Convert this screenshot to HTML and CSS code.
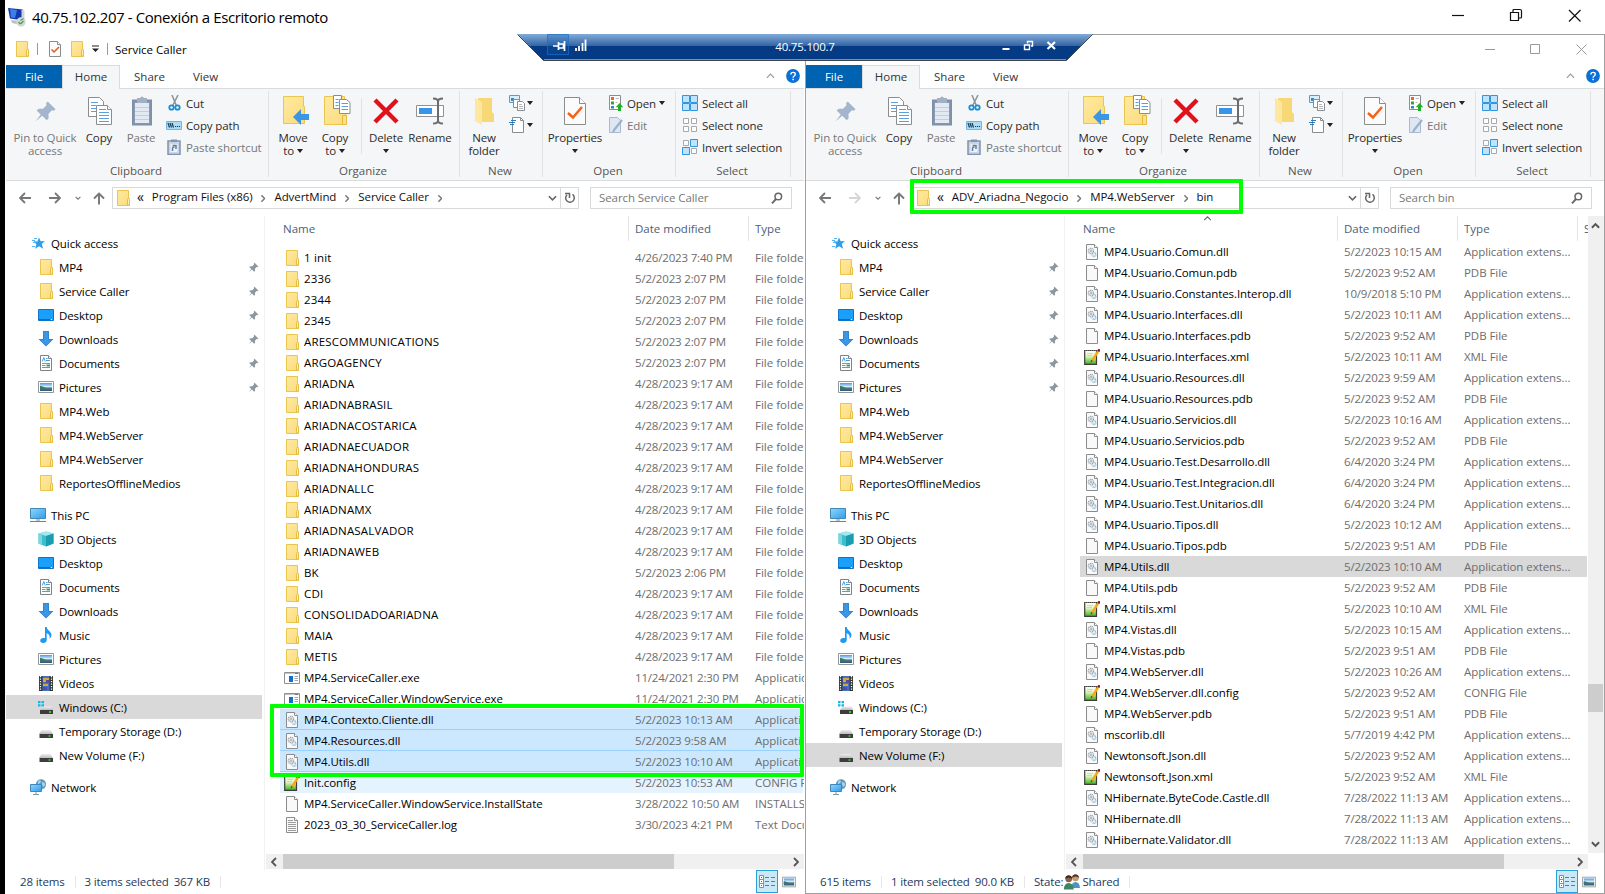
FILE: index.html
```html
<!DOCTYPE html>
<html lang="es">
<head>
  <meta charset="UTF-8" />
  <meta name="viewport" content="width=device-width, initial-scale=1.0" />
  <title>40.75.102.207 - Conexión a Escritorio remoto</title>
  <link rel="stylesheet" href="styles.css">
</head>
<body>
  <svg class="sprite" width="0" height="0" aria-hidden="true">
    <defs>
      <linearGradient id="gFolder" x1="0" y1="0" x2="1" y2="1"><stop offset="0" stop-color="#ffe9a2"/><stop offset="1" stop-color="#fbdc7c"/></linearGradient>
      <linearGradient id="gScreen" x1="0" y1="0" x2="1" y2="1"><stop offset="0" stop-color="#8fd4fb"/><stop offset="1" stop-color="#2f9fe8"/></linearGradient>
      <linearGradient id="gSky" x1="0" y1="0" x2="0" y2="1"><stop offset="0" stop-color="#4f95e0"/><stop offset=".5" stop-color="#e4f3fb"/><stop offset=".6" stop-color="#4d8078"/><stop offset="1" stop-color="#2c5c84"/></linearGradient>
      <linearGradient id="gNote" x1="0" y1="0" x2="0" y2="1"><stop offset="0" stop-color="#fff"/><stop offset=".4" stop-color="#e6f5c4"/><stop offset="1" stop-color="#35b516"/></linearGradient>
      <linearGradient id="gDrive" x1="0" y1="0" x2="0" y2="1"><stop offset="0" stop-color="#eee"/><stop offset="1" stop-color="#bbb"/></linearGradient>
      <linearGradient id="gBar" x1="0" y1="0" x2="0" y2="1"><stop offset="0" stop-color="#82abdb"/><stop offset=".44" stop-color="#3565a3"/><stop offset=".47" stop-color="#053a84"/><stop offset="1" stop-color="#053a84"/></linearGradient>
    </defs>
    <symbol id="folder" viewBox="0 0 16 16"><path d="M2.500.5h11v8h1v7h-12z" fill="url(#gFolder)" stroke="#eac54f"/><path d="M12.500 15V9.500q0-1 1-1t1 1V15z" fill="#fff0b8" stroke="#e6bd42"/></symbol>
    <symbol id="page" viewBox="0 0 16 16"><path d="M2.500.5h8l3 3v12h-11z" fill="#f9f9f9" stroke="#8c8c8c"/><path d="M10.500.5v3h3" fill="#fff" stroke="#8c8c8c"/></symbol>
    <symbol id="dll" viewBox="0 0 16 16"><path d="M2.500.5h8l3 3v12h-11z" fill="#f9f9f9" stroke="#8c8c8c"/><path d="M10.500.5v3h3" fill="#fff" stroke="#8c8c8c"/><circle cx="7" cy="7" r="2.600" fill="none" stroke="#9aa3aa" stroke-width="1.400" stroke-dasharray="1.200 .6"/><circle cx="7" cy="7" r="1" fill="none" stroke="#8c959c" stroke-width=".7"/><circle cx="10" cy="10.500" r="1.900" fill="#e2f0fa" stroke="#8db5d0" stroke-width="1.200" stroke-dasharray="1 .5"/></symbol>
    <symbol id="text" viewBox="0 0 16 16"><path d="M2.500.5h8l3 3v12h-11z" fill="#f9f9f9" stroke="#8c8c8c"/><path d="M10.500.5v3h3" fill="#fff" stroke="#8c8c8c"/><path d="M4 3.500h5M4 5.500h8M4 7.500h8M4 9.500h8M4 11.500h8M4 13.500h8" stroke="#9b9b9b"/></symbol>
    <symbol id="exe" viewBox="0 0 16 16"><path d="M.5 2.500h15v11H.5z" fill="#fff" stroke="#909090"/><path d="M1 3.500h14" stroke="#c4c4c4"/><path d="M11 3.500h3" stroke="#777"/><path d="M5 6h4v6H5z" fill="#0f6fd0"/><path d="M10.500 6.500H14M10.500 8.500H14M10.500 10.500H14" stroke="#a5a5a5"/></symbol>
    <symbol id="config" viewBox="0 0 16 16"><path d="M.7 1.500h11.800v13.800H.7z" fill="url(#gNote)" stroke="#3c3c3c" stroke-width="1.200"/><path d="M1 1.500h12" stroke="#777" stroke-dasharray="1 1"/><path d="M3 4.500h6M3 6.500h5" stroke="#bbb" stroke-width=".6"/><path d="M14.600 1.400 8 12" stroke="#f5a81c" stroke-width="2.400"/><path d="M15.600.2 14.300 2.400" stroke="#a3141c" stroke-width="2.400"/><path d="m7 10.800 2 1.200-2.300 1.700z" fill="#7a4b14"/></symbol>
    <symbol id="star" viewBox="0 0 16 16"><path d="m9 2.500 1.700 3.700 4.100-.1-3 2.900 1.400 4.700-4.100-2.500-4 2.500 1.300-4.500L3.500 6.300l3.900.1z" fill="#2d9fe8"/><path d="M2 5.500h3M3 7.500h3M2 11.500h3M4 3.500h3" stroke="#5ab4ec"/></symbol>
    <symbol id="desktop" viewBox="0 0 16 16"><path d="M.5 2.500h15v11H.5z" fill="#1aa0fb" stroke="#0c75c8"/><path d="M1 12.500h11" stroke="#0b6ab8"/><path d="M13 12.500h1" stroke="#fff"/></symbol>
    <symbol id="down" viewBox="0 0 16 16"><path d="M5 0h6v8h4.500L8 15.500.500 8H5z" fill="#3d96e4"/><path d="M5.500.5h5v8h3.800L8 14.700 1.700 8.500h3.800z" fill="none" stroke="#2c80cf" stroke-width=".8"/></symbol>
    <symbol id="docs" viewBox="0 0 16 16"><path d="M2.500.5h8l3 3v12h-11z" fill="#fff" stroke="#7d8286"/><path d="M10.500.5v3h3" fill="#fff" stroke="#7d8286"/><path d="m4.300 6.500 1.500-4 1.500 4M4 8.500h8M4 10.500h3.500M4 12.500h8" fill="none" stroke="#4ba0dd"/><path d="M8 5.500h4M8 3.500h1.500" stroke="#4ba0dd"/><path d="M8.500 9.500h3.500v2H8.500z" fill="#54906d"/></symbol>
    <symbol id="pics" viewBox="0 0 16 16"><path d="M.5 2.500h15v11H.5z" fill="#fff" stroke="#92979b"/><path d="M2 4h12v8H2z" fill="url(#gSky)"/><path d="M2 7c3 0 5 2 8 3H2z" fill="#3e7564"/></symbol>
    <symbol id="pc" viewBox="0 0 16 16"><path d="M.5 1.500h15v10H.5z" fill="url(#gScreen)" stroke="#4387b4"/><path d="M6 12h4v2H6z" fill="#b9c5cc"/><path d="M0 14.500h16" stroke="#71838e"/></symbol>
    <symbol id="cube" viewBox="0 0 16 16"><path d="m8 .5 7.500 2v10L8 15.500l-7.500-3v-10z" fill="#3bbfcf"/><path d="m8 .5 7.500 2L8 5 .5 2.500z" fill="#a6e6ec"/><path d="M8 5v10.500l7.500-3v-10z" fill="#1a9db2"/><path d="M.5 2.500 4 3.700v10L.5 12.500z" fill="#7bd7df"/></symbol>
    <symbol id="music" viewBox="0 0 16 16"><path d="M7 0h1.700c.3 3.500 4.800 4.300 4.800 8 0 1.600-1 2.800-2 3.500.7-3.200-1-4.600-2.800-5.200V13c0 2-1.500 3-3.500 3S2.200 15 2.200 13.500s1.500-2.900 4.800-2.500z" fill="#1c9bf3"/></symbol>
    <symbol id="video" viewBox="0 0 16 16"><path d="M1 1h14v15H1z" fill="#333"/><path d="M4.500 1h7v15h-7z" fill="#3f74c8"/><path d="M5 3h6v4H5zM5 9h5v2H5z" fill="#d2a83a"/><path d="M8 5h3v3H8zM5 12h4v3H5z" fill="#5b4a9e"/><path d="M2.500 1v15M13.500 1v15" stroke="#fff" stroke-width="1.300" stroke-dasharray="1.300 1.200"/></symbol>
    <symbol id="drive" viewBox="0 0 16 16"><path d="M3.500 7h9L15 11H1z" fill="url(#gDrive)"/><path d="M1.500 11H15v4H1.500z" fill="#3d3d3d"/><path d="M10.500 13h2" stroke="#4be04b" stroke-width="1.300"/></symbol>
    <symbol id="windrive" viewBox="0 0 16 16"><path d="M4.500 7.500h9L15 11H2z" fill="url(#gDrive)"/><path d="M2 11h13v4H2z" fill="#3d3d3d"/><path d="M11 13h2" stroke="#4be04b" stroke-width="1.300"/><path d="M0 2h2.500v2.300H0zM3.500 2H6v2.300H3.500zM0 5.300h2.500v2.200H0zM3.500 5.300H6v2.200H3.500z" fill="#19b3e6"/></symbol>
    <symbol id="network" viewBox="0 0 16 16"><circle cx="11" cy="5.300" r="5.100" fill="#5b98bf"/><path d="M8 2c2-2 3 0 3 1S9 4 8 6zM12 3c2 0 3 1 3.500 3L13 8c-1-2-1-3-1-5z" fill="#a8d2e8"/><path d="M.5 5.500h11v7H.5z" fill="url(#gScreen)" stroke="#3e86bb"/><path d="M3 15.500h6M6 13v2" stroke="#7a95a5"/></symbol>
    <symbol id="pin" viewBox="0 0 16 16"><path d="m9.500 1 5.500 5.500-1.400 1-1.200-.3-2.400 2.500.2 3-1.300 1.300L5.700 11 1 15l3.700-5L1.800 7.300 3.300 6l3 .1L8.700 3.700l-.3-1.500z" fill="currentColor"/></symbol>
    <symbol id="copy" viewBox="0 0 24 28"><g fill="#fff" stroke="#8a8d90"><path d="M.5.5h11l4 4v15H.5z"/><path d="M8.500 8.500h11l4 4v15h-15z"/><path d="M19.500 8.500v4h4"/></g><path d="M3 5.500h7M3 8.500h5M3 11.500h5M3 14.500h5M11 12.500h7M11 15.500h10M11 18.500h10M11 21.500h10M11 24.500h10" stroke="#58a0e0"/></symbol>
    <symbol id="paste" viewBox="0 0 22 30"><path d="M2 4.500h18v24H2z" fill="#8b9bb3" stroke="#7f90aa" stroke-width="2"/><path d="M4 7h14v20H4z" fill="#e3eaf3"/><path d="M6 2h3q2-3 4 0h3v5H6z" fill="#a3b0c3"/><path d="M4 11.500h14M4 15.500h14M4 19.500h14M4 23.500h14" stroke="#c3cedd"/></symbol>
    <symbol id="cut" viewBox="0 0 16 16"><path d="m6 0 4.500 11M12 0 6.500 11" stroke="#8c9399" stroke-width="1.500"/><circle cx="5.500" cy="12.500" r="2.200" fill="none" stroke="#1c8bd0" stroke-width="1.800"/><circle cx="11.500" cy="12.500" r="2.200" fill="none" stroke="#1c8bd0" stroke-width="1.800"/></symbol>
    <symbol id="copypath" viewBox="0 0 16 16"><path d="M.5 4.500h15v8H.5z" fill="#a9dcf7" stroke="#72b7de"/><path d="m2 6 1.500 4.500M4 6l1.500 4.500M6 6l1.500 4.500" stroke="#1c3c55" stroke-width="1.200"/><path d="M9 9.500h5" stroke="#1c3c55" stroke-width="1.200" stroke-dasharray="1.200 .8"/></symbol>
    <symbol id="pastesc" viewBox="0 0 16 16"><path d="M2 2h12v13.500H2z" fill="#c9d5e6" stroke="#7f92ae" stroke-width="1.500"/><path d="M5 .5h6v2.500H5z" fill="#8396b0"/><path d="M4.500 5h7v8h-7z" fill="#eef3f9"/><path d="M6.500 12V9q0-1 2-1M6.500 6.500h3.500V10" fill="none" stroke="#667d9f" stroke-width="1.500"/></symbol>
    <symbol id="moveto" viewBox="0 0 26 29"><path d="M.5.5h20v10h1v17H.5z" fill="url(#gFolder)" stroke="#eac54f"/><path d="M10 21l8-8v5h8v6h-8v5z" fill="#3d96e4"/></symbol>
    <symbol id="copyto" viewBox="0 0 27 30"><path d="M.5 1.500h20v10h1.500v18H.5z" fill="url(#gFolder)" stroke="#eac54f"/><path d="M18.500 20.500h4v9h-4z" fill="#fbe08a" stroke="#e6bd42"/><g fill="#fff" stroke="#8a8d90"><path d="M9.500.5h8v13h-8z"/><path d="M15.500 4.500h7l3.500 3v11H15.500z"/></g><path d="M11.500 4.500h3M11.500 7.500h3M11.500 10.500h3M17.500 8.500H24M17.500 11.500H24M17.500 14.500H24" stroke="#58a0e0"/></symbol>
    <symbol id="delete" viewBox="0 0 26 26"><path d="m2 2 22 22M24 2 2 24" stroke="#e0101c" stroke-width="4.400"/></symbol>
    <symbol id="rename" viewBox="0 0 28 28"><path d="M.5 8.500h27v11H.5z" fill="#fff" stroke="#8f9294"/><path d="M3 11h13v6H3z" fill="#3695e8"/><path d="M17 1.500q5 0 5 3v19q0 3-5 3M27 1.500q-5 0-5 3v19q0 3 5 3" fill="none" stroke="#6a6d70" stroke-width="2"/></symbol>
    <symbol id="newfolder" viewBox="0 0 19 28"><path d="M3 1h14v14l2 2v8H3z" fill="#f8d777"/><path d="m0 1 7 4v23l-7-4z" fill="#ffe7a0"/></symbol>
    <symbol id="newitem" viewBox="0 0 16 16"><path d="M.5.5h10v7H.5z" fill="#d9effb" stroke="#5b9cc8"/><path d="M2 3h3v3H2z" fill="#3f86b8"/><g fill="#fff" stroke="#8a8d90"><path d="M4.500 4.500h6v8h-6z"/><path d="M8.500 6.500h5l2 2v7h-7z"/></g><path d="M10 9.500h3M10 11.500h4M10 13.500h4" stroke="#b5b5b5"/></symbol>
    <symbol id="easy" viewBox="0 0 16 16"><path d="M3.500.5h8l3 3v12h-11z" fill="#fff" stroke="#8a8d90"/><path d="M11.500.5v3h3" fill="none" stroke="#8a8d90"/><path d="M2 3.500h5M0 5.500h6M1 7.500h4" stroke="#2d7dbe"/></symbol>
    <symbol id="props" viewBox="0 0 22 28"><path d="M.5.5h15l6 6v21H.5z" fill="#fbfbfb" stroke="#8a8d90"/><path d="M15.500.5v6h6" fill="#fff" stroke="#8a8d90"/><path d="m4 16 5 4.500L18 10" fill="none" stroke="#f4621a" stroke-width="2.600"/></symbol>
    <symbol id="check" viewBox="0 0 12 16"><path d="M.5.5h8l3 3v12H.5z" fill="#fbfbfb" stroke="#8a8d90"/><path d="M8.500.5v3h3" fill="#fff" stroke="#8a8d90"/><path d="m2.500 8.500 2.500 2.500L10 6" fill="none" stroke="#e8561b" stroke-width="1.500"/></symbol>
    <symbol id="open" viewBox="0 0 16 16"><path d="M1.500.5h11v14h-11z" fill="#fff" stroke="#8a8d90"/><path d="M3 2h3v3H3z" fill="#f4621a"/><path d="M3 6.500h3v3H3z" fill="#2ba82b"/><path d="M3 11h3v2.500H3z" fill="#2d7fd8"/><path d="M7.500 3.500H11M7.500 7.500h2" stroke="#bbb"/><path d="m11.500 8 3.700 4.300H13V16h-3v-3.700H7.800z" fill="#22ac22"/></symbol>
    <symbol id="edit" viewBox="0 0 16 16"><path d="M1.500.5h8l3 3v12h-11z" fill="#dde7f3" stroke="#a9bad0"/><path d="m14 3-7.500 9.500L5 15" stroke="#9fb2cb" stroke-width="2.200"/></symbol>
    <symbol id="selall" viewBox="0 0 16 16"><path d="M.5.5h7v7h-7zM8.500.5h7v7h-7zM.5 8.500h7v7h-7zM8.500 8.500h7v7h-7z" fill="#bfe3fb" stroke="#3594dc"/></symbol>
    <symbol id="selnone" viewBox="0 0 16 16"><path d="M1.500 1.500h5v5h-5zM9.500 1.500h5v5h-5zM1.500 9.500h5v5h-5zM9.500 9.500h5v5h-5z" fill="#fff" stroke="#a8a8a8"/></symbol>
    <symbol id="selinv" viewBox="0 0 16 16"><path d="M1.500 1.500h5v5h-5zM9.500 9.500h5v5h-5z" fill="#fff" stroke="#a8a8a8"/><path d="M8.500.5h7v7h-7zM.5 8.500h7v7h-7z" fill="#bfe3fb" stroke="#3594dc"/></symbol>
    <symbol id="help" viewBox="0 0 14 14"><circle cx="7" cy="7" r="6.900" fill="#0a6fd6"/><path d="M4.900 5.400q0-2 2.200-2t2.200 1.800q0 1-1.200 1.800Q7.100 7.600 7.100 8.700" fill="none" stroke="#fff" stroke-width="1.400"/><path d="M6.300 9.800h1.600v1.500H6.300z" fill="#fff"/></symbol>
    <symbol id="back" viewBox="0 0 12 12"><path d="M12 6H1M6 1 1 6l5 5" fill="none" stroke="currentColor" stroke-width="1.800"/></symbol>
    <symbol id="fwd" viewBox="0 0 12 12"><path d="M0 6h11M6 1l5 5-5 5" fill="none" stroke="currentColor" stroke-width="1.800"/></symbol>
    <symbol id="up" viewBox="0 0 12 12"><path d="M6 12V1M1 6l5-5 5 5" fill="none" stroke="currentColor" stroke-width="1.900"/></symbol>
    <symbol id="chev" viewBox="0 0 10 6"><path d="m1 1 4 4 4-4" fill="none" stroke="currentColor" stroke-width="1.800"/></symbol>
    <symbol id="chevup" viewBox="0 0 10 6"><path d="m1 5 4-4 4 4" fill="none" stroke="currentColor" stroke-width="1.300"/></symbol>
    <symbol id="scrollup" viewBox="0 0 10 7"><path d="m1 6 4-4 4 4" fill="none" stroke="currentColor" stroke-width="2.200"/></symbol>
    <symbol id="scrolldown" viewBox="0 0 10 7"><path d="m1 1 4 4 4-4" fill="none" stroke="currentColor" stroke-width="2.200"/></symbol>
    <symbol id="refresh" viewBox="0 0 12 12"><path d="M3 2.800a4.300 4.300 0 1 0 5.500-.4" fill="none" stroke="#666" stroke-width="1.500"/><path d="M1 1.500h4.500V6" fill="none" stroke="#666" stroke-width="1.500"/></symbol>
    <symbol id="lens" viewBox="0 0 12 12"><circle cx="7.300" cy="4.500" r="3.300" fill="none" stroke="#666" stroke-width="1.500"/><path d="M5 7 1 11.300" stroke="#666" stroke-width="1.900"/></symbol>
    <symbol id="details" viewBox="0 0 16 14"><path d="M.5.5h4v12h-4zM.5 4.500h4M.5 8.500h4" fill="#fff" stroke="#8a8d90"/><path d="M2 10.500h1" stroke="#d33"/><path d="M2 2.500h1M2 6.500h1" stroke="#555"/><path d="M6 2.500h4M12 2.500h4M6 6.500h4M12 6.500h4M6 10.500h4M12 10.500h4" stroke="#777"/></symbol>
    <symbol id="people" viewBox="0 0 16 16"><circle cx="11.500" cy="4" r="3.300" fill="#c79a72"/><path d="M8 4c0-5 7-5 7 0-2-2-4-2-7 0z" fill="#4b3524"/><path d="M7.500 14q0-6 4-6t4.500 6z" fill="#4b94c8"/><circle cx="4.700" cy="5" r="3.300" fill="#8a634a"/><path d="M1.200 5c0-5 7-5 7 0-2-2-4-2-7 0z" fill="#33271f"/><path d="M0 15.500Q0 9 4.700 9t5 6.500z" fill="#3f8561"/></symbol>
    <symbol id="remote" viewBox="0 0 18 19"><path d="m0 0 15 1.500v11L2 10.500z" fill="#1238b0"/><path d="m2 1 7 1-2 8-4-.5z" fill="#3f7de8"/><path d="m13.500 1.500 3 1v10l-3 .5z" fill="#cfd3da"/><path d="m3 12 8 1 2 4-9-2z" fill="#b9bfc7"/><circle cx="13" cy="14" r="4.700" fill="#d3d8d4"/><path d="m10.500 14 2 2M12.500 12.500l3-2M12.500 16l3-3" stroke="#43a047" stroke-width="1.200"/></symbol>
  </svg>

  <div class="screen">
    <header class="rdp-title">
      <svg class="rdp-icon" width="18" height="19"><use href="#remote"/></svg>
      <span class="rdp-name">40.75.102.207 - Conexión a Escritorio remoto</span>
      <svg class="rdp-controls" width="141" height="14" viewBox="0 0 141 14" fill="none" stroke="#111" stroke-width="1.200">
        <path d="M0 7.500h12"/>
        <path d="M58.500 4.500h8v8h-8zM61 4V2.500q0-1 1-1h6q1.500 0 1.500 1.500v6q0 1-1 1H67"/>
        <path d="m117 2 11.500 11.500M128.500 2 117 13.500"/>
      </svg>
    </header>

    <main class="windows" id="windows"></main>

    <div class="connbar">
      <svg width="576" height="27" viewBox="0 0 576 27">
        <path d="M.5 0h575l-26 26.500H26.500z" fill="url(#gBar)"/>
        <path d="M.5.5 26.500 26.500h523L575.500.5" fill="none" stroke="#3f4650"/>
        <path d="M27 25.500h522" stroke="#8ba9cd" stroke-width=".8"/>
        <path d="M30.500.5h21v20h-21z" fill="#0d5cad" fill-opacity=".3" stroke="#1c6fc4" stroke-opacity=".7"/>
        <path d="M36 12h5M41.500 8v8M41.500 10h5v4h-5M47.500 7v10" fill="none" stroke="#fff" stroke-width="1.700"/>
        <path d="M59 17v-3M62 17v-5M65.500 17V9M68.500 17V5.500" stroke="#fff" stroke-width="1.800"/>
        <path d="M485.500 15h7" stroke="#fff" stroke-width="2"/>
        <path d="M507.500 11h5v4.500h-5zM510.500 9.500V7.500h5V12H514" fill="none" stroke="#fff" stroke-width="1.400"/>
        <path d="m530.500 8 7.500 7M538 8l-7.500 7" stroke="#fff" stroke-width="2.200"/>
      </svg>
      <span class="connbar-host">40.75.100.7</span>
    </div>
    <div class="mark mark-path"></div>
    <div class="mark mark-files"></div>
  </div>

  <script src="script.js"></script>
</body>
</html>
```
FILE: styles.css
```css
* {
  box-sizing: border-box;
}

body, html {
  margin: 0;
  padding: 0;
  height: 894px;
  overflow: hidden;
  background: #000;
  color: #000;
  font-family: 'Open Sans', 'Noto Sans', sans-serif;
  font-size: 11.5px;
}

svg {
  display: block;
  flex: none;
}

.sprite {
  position: absolute;
}

.screen {
  position: relative;
  width: 1600px;
  height: 894px;
  margin-left: 5px;
  background: #fff;
}

.rdp-title {
  display: flex;
  align-items: center;
  height: 34px;
  padding: 0 0 0 3px;
}

.rdp-name {
  margin-left: 6px;
  font-size: 15px;
  letter-spacing: -0.41px;
  white-space: nowrap;
}

.rdp-controls {
  margin: -4px 12px 0 auto;
}

.windows {
  display: flex;
}

/* explorer window */
.win {
  display: flex;
  flex-direction: column;
  width: 800px;
  height: 860px;
  border: 1px solid #fff;
  white-space: nowrap;
}

.win.inactive {
  border-color: #a0a0a0;
}

.caption {
  display: flex;
  align-items: center;
  height: 30px;
  padding: 0 0 2px 8px;
}

.caption .bar {
  width: 1px;
  height: 12px;
  background: #999;
}

.caption .bar.first { margin: 0 11px 0 7px; }
.caption .doc { margin-right: 8px; }
.caption .bar.second { margin: 0 7px 0 7px; }
.caption .more { margin-left: 7px; }
.caption .controls { margin: 0 17px 0 auto; }

.tabs {
  display: flex;
  align-items: flex-end;
  height: 24px;
  border-bottom: 1px solid #dadbdc;
  color: #333;
}

.tab {
  height: 23px;
  line-height: 23px;
  text-align: center;
}

.tab.file {
  width: 56px;
  background: #0063b1;
  color: #fff;
}

.tab.home {
  width: 58px;
  height: 24px;
  margin-bottom: -1px;
  border: 1px solid #dadbdc;
  border-bottom: 0;
  line-height: 22px;
  background: #f5f6f7;
}

.tab.share { width: 59px; }
.tab.view { width: 53px; }

.tabs .collapse {
  margin: 0 11px 9px auto;
  color: #999;
}

.tabs .help {
  margin: 0 4px 5px 0;
}

.ribbon {
  display: flex;
  height: 92px;
  padding-top: 2px;
  background: #f5f6f7;
  border-bottom: 1px solid #dadbdc;
  color: #2b2b2b;
  letter-spacing: -0.12px;
}

.group {
  display: flex;
  flex-direction: column;
  height: 86px;
  border-right: 1px solid #e1e2e3;
}

.group-name {
  line-height: 13px;
  padding-right: 2px;
  text-align: center;
  color: #555;
  letter-spacing: 0;
}

.tools {
  display: flex;
  height: 73px;
}

.clipboard { width: 263px; }
.clipboard .tools { padding-left: 7px; }
.organize { width: 191px; }
.organize .tools { padding-left: 3px; }
.new { width: 83px; }
.new .tools { padding-left: 4px; }
.open { width: 133px; }
.open .tools { padding-left: 2px; }
.select { width: 115px; }
.select .tools { padding-left: 6px; }

.big {
  display: flex;
  flex-direction: column;
  align-items: center;
  line-height: 13px;
  text-align: center;
}

.big-icon {
  display: flex;
  align-items: center;
  height: 40px;
}

.big.nudge .big-icon {
  padding-left: 2px;
}

.big.to .big-icon {
  padding: 0 0 2px 5px;
}

.big.off, .small.off {
  color: #777;
}

.big .pinned {
  color: #a3b5cc;
}

.caret {
  display: inline-block;
  border: 3.5px solid transparent;
  border-top: 4px solid #222;
  border-bottom: 0;
  vertical-align: 2px;
}

.divider {
  width: 1px;
  height: 56px;
  margin: 7px 4px 0 5px;
  background: #e1e2e3;
}

.smalls {
  display: flex;
  flex-direction: column;
  margin: 1px 0 0 5px;
}

.small {
  display: flex;
  align-items: center;
  height: 22px;
  gap: 4px;
}

.new .smalls { margin-left: 5px; }
.new .small { gap: 2px; }
.open .smalls { margin-left: 3px; }
.open .small { gap: 3px; }
.select .smalls { margin-left: 0; }

/* address bar */
.address {
  display: flex;
  align-items: center;
  height: 35px;
  padding-bottom: 1px;
  color: #777;
}

.address .back { margin-left: 13px; }
.address .fwd { margin-left: 18px; }
.address .fwd.off { color: #d5d5d5; }
.address .recent { margin: 0 12px 0 14px; }

.path {
  display: flex;
  align-items: center;
  width: 467px;
  height: 22px;
  margin-left: 7px;
  border: 1px solid #d9d9d9;
  color: #111;
  line-height: 18px;
  letter-spacing: -0.08px;
}

.path .folder { margin-left: 2px; }
.path .guillemet { margin: 0 8px 2px 6px; font-size: 14px; }
.path .crumb { padding-bottom: 2px; }
.path .sep { margin: 0 7px; transform: rotate(-90deg); color: #777; }
.path .drop { margin: 0 3px 0 auto; color: #666; }

.path .reload {
  display: flex;
  align-items: center;
  justify-content: center;
  width: 18px;
  height: 20px;
  border-left: 1px solid #d9d9d9;
}

.search {
  display: flex;
  align-items: center;
  justify-content: space-between;
  width: 202px;
  height: 22px;
  margin-left: 11px;
  padding: 0 8px;
  border: 1px solid #d9d9d9;
  letter-spacing: -0.08px;
}

.search .hint { padding-bottom: 2px; }

/* navigation pane and file list */
.content {
  display: flex;
  height: 654px;
}

.nav {
  flex: none;
  width: 259px;
  padding: 15px 2px 0 0;
  border-right: 1px solid #f2f2f2;
}

.nav-item {
  display: flex;
  align-items: center;
  height: 24px;
  gap: 5px;
  padding: 0 3px 0 32px;
  letter-spacing: -0.09px;
}

.nav-item.root { padding-left: 24px; }
.nav-item.gap { margin-top: 8px; }
.nav-item.current { background: #d9d9d9; }

.nav-item .stuck {
  margin-left: auto;
  color: #8d979e;
}

.pane {
  display: grid;
  flex: none;
  grid-template: 637px 17px / 1fr auto;
  width: 539px;
}

.list {
  overflow: hidden;
}

.cols {
  position: relative;
  display: flex;
  height: 25px;
  line-height: 25px;
  color: #4c607a;
}

.cols span {
  flex: none;
  padding-left: 6px;
  border-right: 1px solid #e5e5e5;
}

.cols .name { padding-left: 18px; }
.cols span:last-child { border: 0; }

.sort {
  position: absolute;
  left: 138px;
  top: 0;
  color: #666;
}

.rows {
  padding: 0 1px 0 15px;
}

.active .rows {
  padding-top: 6px;
}

.row {
  display: flex;
  align-items: center;
  height: 21px;
  padding-left: 4px;
}

.row.hover { background: #e5f3ff; }

.row.picked {
  background: #cce8ff;
  box-shadow: inset 0 -1px #99d1ff;
}

.row.gray { background: #d9d9d9; }

.row span {
  flex: none;
  color: #6d6d6d;
}

.row .name {
  display: flex;
  align-items: center;
  gap: 4px;
  color: #000;
  letter-spacing: -0.09px;
}

.row.is-folder .name {
  letter-spacing: 0.17px;
}

.date { width: 120px; }
.row .date { letter-spacing: -0.18px; }
.type { width: 120px; }
.inactive .row .type { letter-spacing: -0.06px; }

.active .name { width: 364px; }
.active .row .name { width: 351px; }
.inactive .name { width: 273px; }
.inactive .row .name { width: 260px; }

.scroll-x {
  display: flex;
  align-items: center;
  height: 15px;
  margin: 1px 0 0 1px;
  background: #f0f0f0;
  color: #555;
}

.scroll-x .arrow {
  margin: 0 4px 0 3px;
  transform: rotate(90deg);
}

.scroll-x .arrow.next {
  margin: 0 3px 0 auto;
  transform: rotate(-90deg);
}

.scroll-x .thumb {
  height: 15px;
  background: #cdcdcd;
}

.active .thumb-x { width: 391px; }
.inactive .thumb-x { width: 421px; }

.scroll-y {
  display: flex;
  flex-direction: column;
  align-items: center;
  justify-content: space-between;
  width: 16px;
  padding: 6px 1px 5px 0;
  background: #f0f0f0;
  color: #555;
}

.scroll-y .thumb {
  width: 15px;
  height: 28px;
  margin-top: 326px;
  background: #cdcdcd;
}

/* status bar */
.status {
  display: flex;
  align-items: center;
  height: 23px;
  padding-left: 14px;
  color: #1e395b;
  letter-spacing: -0.15px;
}

.status .bar {
  width: 1px;
  height: 12px;
  margin: 0 9px 0 10px;
  background: #e8e8e8;
}

.status .size { margin-left: 5px; }
.status .people { margin: 0 2px 0 1px; }

.views {
  display: flex;
  align-items: center;
  gap: 4px;
  margin: 0 8px 0 auto;
}

.view-on {
  display: flex;
  align-items: center;
  justify-content: center;
  width: 22px;
  height: 23px;
  border: 1px solid #2a9fd8;
  background: #cbe8f6;
}

/* remote session bar lying over both windows */
.connbar {
  position: absolute;
  left: 512px;
  top: 34px;
}

.connbar-host {
  position: absolute;
  left: 0;
  top: 0;
  width: 576px;
  line-height: 25px;
  text-align: center;
  color: #fff;
  letter-spacing: -0.2px;
}

.mark {
  position: absolute;
  border: 4px solid #0f0;
  border-radius: 1px;
}

.mark-path {
  left: 905px;
  top: 179px;
  width: 333px;
  height: 35px;
}

.mark-files {
  left: 265px;
  top: 704px;
  width: 534px;
  height: 73px;
}
```
FILE: script.js
```js
const DLL = 'Application extens...';

const leftFiles = [
  ['folder', '1 init', '4/26/2023 7:40 PM', 'File folder'],
  ['folder', '2336', '5/2/2023 2:07 PM', 'File folder'],
  ['folder', '2344', '5/2/2023 2:07 PM', 'File folder'],
  ['folder', '2345', '5/2/2023 2:07 PM', 'File folder'],
  ['folder', 'ARESCOMMUNICATIONS', '5/2/2023 2:07 PM', 'File folder'],
  ['folder', 'ARGOAGENCY', '5/2/2023 2:07 PM', 'File folder'],
  ['folder', 'ARIADNA', '4/28/2023 9:17 AM', 'File folder'],
  ['folder', 'ARIADNABRASIL', '4/28/2023 9:17 AM', 'File folder'],
  ['folder', 'ARIADNACOSTARICA', '4/28/2023 9:17 AM', 'File folder'],
  ['folder', 'ARIADNAECUADOR', '4/28/2023 9:17 AM', 'File folder'],
  ['folder', 'ARIADNAHONDURAS', '4/28/2023 9:17 AM', 'File folder'],
  ['folder', 'ARIADNALLC', '4/28/2023 9:17 AM', 'File folder'],
  ['folder', 'ARIADNAMX', '4/28/2023 9:17 AM', 'File folder'],
  ['folder', 'ARIADNASALVADOR', '4/28/2023 9:17 AM', 'File folder'],
  ['folder', 'ARIADNAWEB', '4/28/2023 9:17 AM', 'File folder'],
  ['folder', 'BK', '5/2/2023 2:06 PM', 'File folder'],
  ['folder', 'CDI', '4/28/2023 9:17 AM', 'File folder'],
  ['folder', 'CONSOLIDADOARIADNA', '4/28/2023 9:17 AM', 'File folder'],
  ['folder', 'MAIA', '4/28/2023 9:17 AM', 'File folder'],
  ['folder', 'METIS', '4/28/2023 9:17 AM', 'File folder'],
  ['exe', 'MP4.ServiceCaller.exe', '11/24/2021 2:30 PM', 'Application'],
  ['exe', 'MP4.ServiceCaller.WindowService.exe', '11/24/2021 2:30 PM', 'Application'],
  ['dll', 'MP4.Contexto.Cliente.dll', '5/2/2023 10:13 AM', 'Application', 'picked'],
  ['dll', 'MP4.Resources.dll', '5/2/2023 9:58 AM', 'Application', 'picked'],
  ['dll', 'MP4.Utils.dll', '5/2/2023 10:10 AM', 'Application', 'picked'],
  ['config', 'Init.config', '5/2/2023 10:53 AM', 'CONFIG File', 'hover'],
  ['page', 'MP4.ServiceCaller.WindowService.InstallState', '3/28/2022 10:50 AM', 'INSTALLSTATE'],
  ['text', '2023_03_30_ServiceCaller.log', '3/30/2023 4:21 PM', 'Text Document'],
];

const rightFiles = [
  ['dll', 'MP4.Usuario.Comun.dll', '5/2/2023 10:15 AM', DLL],
  ['page', 'MP4.Usuario.Comun.pdb', '5/2/2023 9:52 AM', 'PDB File'],
  ['dll', 'MP4.Usuario.Constantes.Interop.dll', '10/9/2018 5:10 PM', DLL],
  ['dll', 'MP4.Usuario.Interfaces.dll', '5/2/2023 10:11 AM', DLL],
  ['page', 'MP4.Usuario.Interfaces.pdb', '5/2/2023 9:52 AM', 'PDB File'],
  ['config', 'MP4.Usuario.Interfaces.xml', '5/2/2023 10:11 AM', 'XML File'],
  ['dll', 'MP4.Usuario.Resources.dll', '5/2/2023 9:59 AM', DLL],
  ['page', 'MP4.Usuario.Resources.pdb', '5/2/2023 9:52 AM', 'PDB File'],
  ['dll', 'MP4.Usuario.Servicios.dll', '5/2/2023 10:16 AM', DLL],
  ['page', 'MP4.Usuario.Servicios.pdb', '5/2/2023 9:52 AM', 'PDB File'],
  ['dll', 'MP4.Usuario.Test.Desarrollo.dll', '6/4/2020 3:24 PM', DLL],
  ['dll', 'MP4.Usuario.Test.Integracion.dll', '6/4/2020 3:24 PM', DLL],
  ['dll', 'MP4.Usuario.Test.Unitarios.dll', '6/4/2020 3:24 PM', DLL],
  ['dll', 'MP4.Usuario.Tipos.dll', '5/2/2023 10:12 AM', DLL],
  ['page', 'MP4.Usuario.Tipos.pdb', '5/2/2023 9:51 AM', 'PDB File'],
  ['dll', 'MP4.Utils.dll', '5/2/2023 10:10 AM', DLL, 'gray'],
  ['page', 'MP4.Utils.pdb', '5/2/2023 9:52 AM', 'PDB File'],
  ['config', 'MP4.Utils.xml', '5/2/2023 10:10 AM', 'XML File'],
  ['dll', 'MP4.Vistas.dll', '5/2/2023 10:15 AM', DLL],
  ['page', 'MP4.Vistas.pdb', '5/2/2023 9:51 AM', 'PDB File'],
  ['dll', 'MP4.WebServer.dll', '5/2/2023 10:26 AM', DLL],
  ['config', 'MP4.WebServer.dll.config', '5/2/2023 9:52 AM', 'CONFIG File'],
  ['page', 'MP4.WebServer.pdb', '5/2/2023 9:51 AM', 'PDB File'],
  ['dll', 'mscorlib.dll', '5/7/2019 4:42 PM', DLL],
  ['dll', 'Newtonsoft.Json.dll', '5/2/2023 9:52 AM', DLL],
  ['config', 'Newtonsoft.Json.xml', '5/2/2023 9:52 AM', 'XML File'],
  ['dll', 'NHibernate.ByteCode.Castle.dll', '7/28/2022 11:13 AM', DLL],
  ['dll', 'NHibernate.dll', '7/28/2022 11:13 AM', DLL],
  ['dll', 'NHibernate.Validator.dll', '7/28/2022 11:13 AM', DLL],
  ['page', '', '', ''],
];

// icon, label, extra classes
const navItems = [
  ['star', 'Quick access', 'root'],
  ['folder', 'MP4', 'pin'],
  ['folder', 'Service Caller', 'pin'],
  ['desktop', 'Desktop', 'pin'],
  ['down', 'Downloads', 'pin'],
  ['docs', 'Documents', 'pin'],
  ['pics', 'Pictures', 'pin'],
  ['folder', 'MP4.Web', ''],
  ['folder', 'MP4.WebServer', ''],
  ['folder', 'MP4.WebServer', ''],
  ['folder', 'ReportesOfflineMedios', ''],
  ['pc', 'This PC', 'root gap'],
  ['cube', '3D Objects', ''],
  ['desktop', 'Desktop', ''],
  ['docs', 'Documents', ''],
  ['down', 'Downloads', ''],
  ['music', 'Music', ''],
  ['pics', 'Pictures', ''],
  ['video', 'Videos', ''],
  ['windrive', 'Windows (C:)', ''],
  ['drive', 'Temporary Storage (D:)', ''],
  ['drive', 'New Volume (F:)', ''],
  ['network', 'Network', 'root gap'],
];

function icon(id, w = 16, h = 16, cls = '') {
  return `<svg class="${cls}" width="${w}" height="${h}"><use href="#${id}"/></svg>`;
}

function big(width, art, label, cls = '') {
  return `<div class="big ${cls}" style="width:${width}px"><div class="big-icon">${art}</div><div>${label}</div></div>`;
}

function small(id, label, cls = '') {
  return `<div class="small ${cls}">${icon(id)}${label}</div>`;
}

function group(cls, name, tools) {
  return `<div class="group ${cls}"><div class="tools">${tools}</div><div class="group-name">${name}</div></div>`;
}

const caret = '<i class="caret"></i>';

const ribbon = `<div class="ribbon">
  ${group('clipboard', 'Clipboard',
    big(64, icon('pin', 23, 23, 'pinned'), 'Pin to Quick<br>access', 'off') +
    big(44, icon('copy', 24, 28), 'Copy', 'nudge') +
    big(40, icon('paste', 22, 30), 'Paste', 'off nudge') +
    `<div class="smalls">${small('cut', 'Cut')}${small('copypath', 'Copy path')}${small('pastesc', 'Paste shortcut', 'off')}</div>`)}
  ${group('organize', 'Organize',
    big(42, icon('moveto', 26, 29), `Move<br>to ${caret}`, 'to') +
    big(42, icon('copyto', 27, 30), `Copy<br>to ${caret}`, 'to') +
    '<div class="divider"></div>' +
    big(40, icon('delete', 26, 26), `Delete<br>${caret}`) +
    big(48, icon('rename', 28, 28), 'Rename'))}
  ${group('new', 'New',
    big(40, icon('newfolder', 19, 28), 'New<br>folder') +
    `<div class="smalls">${small('newitem', caret)}${small('easy', caret)}</div>`)}
  ${group('open', 'Open',
    big(60, icon('props', 22, 28), `Properties<br>${caret}`) +
    `<div class="smalls">${small('open', 'Open ' + caret)}${small('edit', 'Edit', 'off')}</div>`)}
  ${group('select', 'Select',
    `<div class="smalls">${small('selall', 'Select all')}${small('selnone', 'Select none')}${small('selinv', 'Invert selection')}</div>`)}
</div>`;

function renderWindow(w) {
  const sep = icon('chev', 8, 5, 'sep');
  const crumbs = w.path.map(p => `<span class="crumb">${p}</span>`).join(sep);
  const controls = `<svg class="controls" width="102" height="11" fill="none" stroke="#999"><path d="M0 5.500h10M45.500.5h9v9h-9zM91.500.5l10 10M101.500.5l-10 10"/></svg>`;
  const nav = navItems.map(([ic, label, cls], i) => `
    <div class="nav-item ${cls} ${i === w.current ? 'current' : ''}">${icon(ic)}${label}
      ${cls === 'pin' ? icon('pin', 11, 11, 'stuck') : ''}</div>`).join('');
  const rows = w.files.map(([ic, name, date, type, cls]) => `
    <div class="row is-${ic} ${cls || ''}"><span class="name">${icon(ic)}${name}</span><span class="date">${date}</span><span class="type">${type}</span></div>`).join('');

  return `<section class="win ${w.cls}">
    <div class="caption">
      ${icon('folder')}<div class="bar first"></div>${icon('check', 12, 16, 'doc')}${icon('folder')}
      <svg class="more" width="8" height="8"><path d="M0 1h7" stroke="#222"/><path d="M0 3.500h7L3.500 7z" fill="#222"/></svg>
      <div class="bar second"></div>${w.title}
      ${w.cls === 'inactive' ? controls : ''}
    </div>
    <div class="tabs">
      <div class="tab file">File</div><div class="tab home">Home</div><div class="tab share">Share</div><div class="tab view">View</div>
      ${icon('chevup', 9, 6, 'collapse')}${icon('help', 14, 14, 'help')}
    </div>
    ${ribbon}
    <div class="address">
      ${icon('back', 12, 12, 'back')}${icon('fwd', 12, 12, 'fwd ' + w.forward)}${icon('chev', 6, 4, 'recent')}${icon('up', 12, 13)}
      <div class="path">${icon('folder', 16, 16, 'folder')}<span class="guillemet">«</span>${crumbs}${w.tail ? sep : ''}
        ${icon('chev', 9, 6, 'drop')}<div class="reload">${icon('refresh', 12, 12)}</div></div>
      <div class="search"><span class="hint">${w.search}</span>${icon('lens', 12, 12)}</div>
    </div>
    <div class="content">
      <div class="nav">${nav}</div>
      <div class="pane">
        <div class="list">
          <div class="cols"><span class="name">Name</span><span class="date">Date modified</span><span class="type">Type</span>${w.sorted ? '<span>Size</span>' + icon('chevup', 9, 5, 'sort') : ''}</div>
          <div class="rows">${rows}</div>
        </div>
        ${w.sorted ? `<div class="scroll-y">${icon('scrollup', 9, 7)}<div class="thumb"></div>${icon('scrolldown', 9, 7)}</div>` : '<div></div>'}
        <div class="scroll-x">${icon('chev', 10, 6, 'arrow')}<div class="thumb thumb-x"></div>${icon('chev', 10, 6, 'arrow next')}</div>
      </div>
    </div>
    <div class="status">${w.status}
      <div class="views"><div class="view-on">${icon('details', 16, 14)}</div>${icon('pics', 14, 14)}</div>
    </div>
  </section>`;
}

const bar = '<div class="bar"></div>';

document.getElementById('windows').innerHTML =
  renderWindow({
    cls: 'active', title: 'Service Caller', forward: '', tail: true, sorted: false, current: 19,
    path: ['Program Files (x86)', 'AdvertMind', 'Service Caller'], search: 'Search Service Caller', files: leftFiles,
    status: `28 items${bar}3 items selected<span class="size">367 KB</span>${bar}`,
  }) +
  renderWindow({
    cls: 'inactive', title: '', forward: 'off', tail: false, sorted: true, current: 21,
    path: ['ADV_Ariadna_Negocio', 'MP4.WebServer', 'bin'], search: 'Search bin', files: rightFiles,
    status: `615 items${bar}1 item selected<span class="size">90.0 KB</span>${bar}State:${icon('people', 16, 16, 'people')}Shared${bar}`,
  });
```
